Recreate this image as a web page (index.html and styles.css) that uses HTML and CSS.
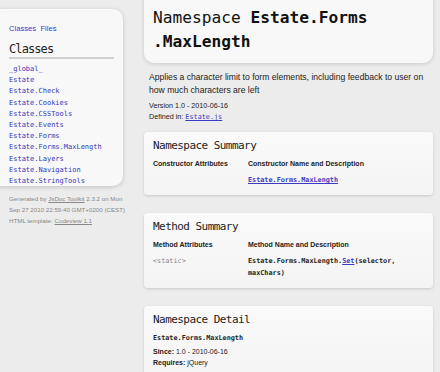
FILE: index.html
```html
<!DOCTYPE html>
<html lang="en">
<head>
  <meta charset="UTF-8" />
  <title>Estate.Forms.MaxLength</title>
  <link rel="stylesheet" href="styles.css">
</head>
<body>
  <!-- Sidebar: class index -->
  <div class="sidebar">
    <div class="index-card">
      <a href="#" class="index-link">Classes</a> <a href="#" class="index-link">Files</a>
      <h2 class="index-title">Classes</h2>
      <ul class="class-list">
        <li><a href="#">_global_</a></li>
        <li><a href="#">Estate</a></li>
        <li><a href="#">Estate.Check</a></li>
        <li><a href="#">Estate.Cookies</a></li>
        <li><a href="#">Estate.CSSTools</a></li>
        <li><a href="#">Estate.Events</a></li>
        <li><a href="#">Estate.Forms</a></li>
        <li><a href="#">Estate.Forms.MaxLength</a></li>
        <li><a href="#">Estate.Layers</a></li>
        <li><a href="#">Estate.Navigation</a></li>
        <li><a href="#">Estate.StringTools</a></li>
      </ul>
    </div>
    <div class="generated">
      Generated by <a href="#">JsDoc Toolkit</a> 2.3.2 on Mon<br>
      Sep 27 2010 22:59:40 GMT+0200 (CEST)<br>
      HTML template: <a href="#">Codeview 1.1</a>
    </div>
  </div>

  <!-- Main content -->
  <div class="content">
    <div class="title-card">
      <h1>Namespace <b>Estate.Forms<br>.MaxLength</b></h1>
    </div>

    <p class="description">Applies a character limit to form elements, including feedback to user on how much characters are left</p>
    <p class="meta">Version 1.0 - 2010-06-16<br>Defined in: <a href="#" class="code-link">Estate.js</a></p>

    <div class="section">
      <h2>Namespace Summary</h2>
      <div class="summary-table">
        <span class="th">Constructor Attributes</span>
        <span class="th">Constructor Name and Description</span>
        <span></span>
        <span><a href="#" class="code-link strong">Estate.Forms.MaxLength</a></span>
      </div>
    </div>

    <div class="section">
      <h2>Method Summary</h2>
      <div class="summary-table">
        <span class="th">Method Attributes</span>
        <span class="th">Method Name and Description</span>
        <span class="attr">&lt;static&gt;</span>
        <span class="signature">Estate.Forms.MaxLength.<a href="#">Set</a>(selector, maxChars)</span>
      </div>
    </div>

    <div class="section">
      <h2>Namespace Detail</h2>
      <div class="detail-name">Estate.Forms.MaxLength</div>
      <div class="detail-row"><b>Since:</b> 1.0 - 2010-06-16</div>
      <div class="detail-row"><b>Requires:</b> jQuery</div>
    </div>
  </div>
</body>
</html>
```

FILE: styles.css
```css
* {
  box-sizing: border-box;
  margin: 0;
  padding: 0;
}

body {
  font-family: 'Liberation Sans', Arial, sans-serif;
  background: #ececec;
  color: #222;
  display: flex;
  align-items: flex-start;
  gap: 21px;
  width: 440px;
  height: 372px;
  overflow: hidden;
}

a {
  color: #3a3ac4;
}

/* Sidebar */
.sidebar {
  width: 133px;
  margin-left: -10px;
  flex-shrink: 0;
}

.index-card {
  margin-top: 9px;
  background: #f8f8f8;
  border-radius: 10px;
  box-shadow: 0 1px 4px rgba(0, 0, 0, 0.18);
  padding: 8px 9px 6px 19px;
  height: 177px;
}

.index-link {
  font-size: 7.6px;
  line-height: 10px;
  text-decoration: none;
}

.index-title {
  font-family: 'DejaVu Sans Mono', monospace;
  font-weight: normal;
  font-size: 12px;
  letter-spacing: -0.9px;
  line-height: 14px;
  margin-top: 7px;
  padding-bottom: 1px;
  border-bottom: 2px solid #cfcfcf;
  margin-right: 0;
}

.class-list {
  list-style: none;
  margin-top: 5px;
}

.class-list li {
  font-family: 'DejaVu Sans Mono', monospace;
  font-size: 7px;
  line-height: 11.2px;
}

.class-list a {
  text-decoration: none;
  color: #3535b8;
}

.generated {
  margin-top: 7px;
  padding-left: 19px;
  font-size: 6.2px;
  line-height: 11px;
  color: #888;
  white-space: nowrap;
}

.generated a {
  color: #888;
}

/* Main column */
.content {
  width: 289px;
  flex-shrink: 0;
}

.title-card {
  margin-top: -10px;
  background: #f8f8f8;
  border-radius: 10px;
  box-shadow: 0 1px 4px rgba(0, 0, 0, 0.15);
  padding: 16px 9px 9px;
}

.title-card h1 {
  font-family: 'DejaVu Sans Mono', monospace;
  font-weight: normal;
  font-size: 16.2px;
  line-height: 24px;
  color: #111;
}

.description {
  margin: 8px 4px 0 5px;
  font-size: 8.6px;
  line-height: 13px;
}

.meta {
  margin: 3px 5px 0;
  font-size: 7.2px;
  line-height: 11px;
}

.code-link {
  font-family: 'DejaVu Sans Mono', monospace;
  font-size: 6.8px;
}

.strong {
  font-weight: bold;
}

.section {
  margin-top: 18px;
  background: linear-gradient(#fafafa, #f4f4f4);
  border-radius: 4px;
  box-shadow: 0 1px 3px rgba(0, 0, 0, 0.16);
  padding: 7px 10px 9px 9px;
}

.meta + .section {
  margin-top: 9px;
}

.section h2 {
  font-family: 'DejaVu Sans Mono', monospace;
  font-weight: normal;
  font-size: 11px;
  letter-spacing: -0.55px;
  line-height: 14px;
  color: #222;
}

.summary-table {
  display: grid;
  grid-template-columns: 95px 1fr;
  row-gap: 4px;
  margin-top: 5px;
  font-size: 7px;
  line-height: 12px;
}

.th {
  font-weight: bold;
}

.attr {
  font-family: 'DejaVu Sans Mono', monospace;
  font-size: 6.8px;
  color: #888;
}

.signature {
  font-family: 'DejaVu Sans Mono', monospace;
  font-size: 6.8px;
  font-weight: bold;
  line-height: 12px;
}

.detail-name {
  margin-top: 5px;
  font-family: 'DejaVu Sans Mono', monospace;
  font-size: 6.8px;
  font-weight: bold;
  line-height: 12px;
}

.detail-row {
  font-size: 7px;
  line-height: 11px;
}

.detail-name + .detail-row {
  margin-top: 2px;
}
```
